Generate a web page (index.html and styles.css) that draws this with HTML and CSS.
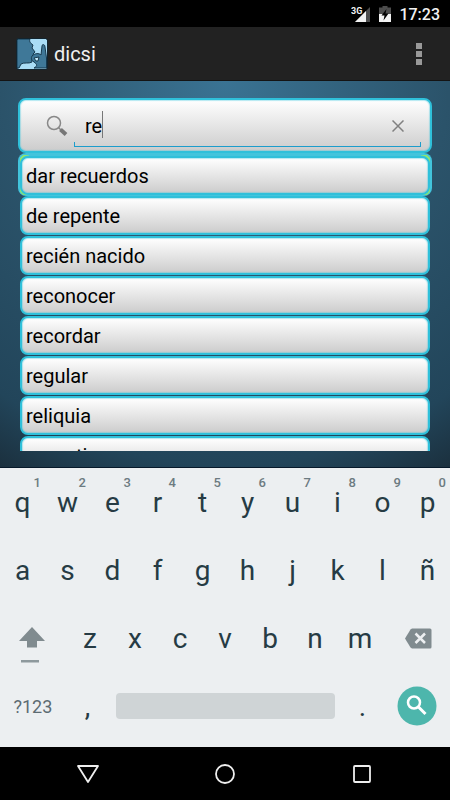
FILE: index.html
```html
<!DOCTYPE html>
<html lang="es">
<head>
<meta charset="utf-8">
<meta name="viewport" content="width=device-width, initial-scale=1">
<title>dicsi</title>
<link rel="stylesheet" href="styles.css">
</head>
<body>
<div class="status">
  <svg class="signal" width="20" height="18" viewBox="0 0 20 18" aria-hidden="true">
    <path d="M19 1V16H4Z" fill="#4d4d4d"/><path d="M15 5V16H4Z" fill="#f2f2f2"/>
    <text class="net" x="0" y="8">3G</text>
  </svg>
  <svg width="12" height="18" viewBox="0 0 12 18" aria-hidden="true">
    <path d="M3.500 0H8.500V1.500H12V8H0V1.500H3.500Z" fill="#4d4d4d"/><path d="M0 8H12V16H0Z" fill="#f2f2f2"/>
    <path d="M7.500 3L2.500 9.500H5.500L4.500 14.500L9.500 7.500H6.500Z" fill="#000"/>
  </svg>
  <span class="clock">17:23</span>
</div>
<header class="bar">
  <svg class="logo" width="32" height="32" viewBox="0 0 32 32" aria-hidden="true">
    <rect x="1" y="1" width="30" height="30" rx="1" fill="#a9dcf5"/>
    <path d="M1 1H14C13 3 14 5 17 7L16 10L19 14L17 16L18 18L16 20V24C13 26 8 24 5 26L3 30H1Z" fill="#3f7898" stroke="#17394e"/>
    <path d="M16 18C19 15 23 15 25 17L26 8C26 6 29 6 29 9L30.500 20V30H18C22 28 21 26 18 24C15 22 15 20 16 18Z" fill="#3f7898" stroke="#17394e"/>
    <path d="M18 20L23 19L22 23L20 23Z" fill="#c4ebfb" stroke="#17394e"/>
    <rect x="0.500" y="0.500" width="31" height="31" rx="2" fill="none" stroke="#12242e"/>
  </svg>
  <h1>dicsi</h1>
  <button class="more" aria-label="Más opciones"><i></i><i></i><i></i></button>
</header>
<main>
  <form class="search" role="search">
    <svg class="lens" width="22" height="22" viewBox="0 0 22 22" aria-hidden="true">
      <circle cx="8" cy="8" r="6.500" fill="none" stroke="#888" stroke-width="1.500"/>
      <path d="M12.500 12.500L15 15" stroke="#888" stroke-width="1.500"/><path d="M14.500 14.500L20 19.500" stroke="#777" stroke-width="4"/>
    </svg>
    <div class="field">
      <input type="text" value="re" aria-label="Buscar"><span class="caret"></span>
      <button type="button" class="clear" aria-label="Borrar búsqueda"><svg width="12" height="12" viewBox="0 0 12 12"><path d="M0.500 0.500L11.500 11.500M11.500 0.500L0.500 11.500" stroke="#808080" stroke-width="1.500"/></svg></button>
    </div>
  </form>
  <ul class="results">
    <li class="selected"><button>dar recuerdos</button></li>
    <li><button>de repente</button></li>
    <li><button>recién nacido</button></li>
    <li><button>reconocer</button></li>
    <li><button>recordar</button></li>
    <li><button>regular</button></li>
    <li><button>reliquia</button></li>
    <li><button>repentino</button></li>
  </ul>
</main>
<section class="keyboard" aria-label="Teclado">
  <div class="keys">
    <button>q<sup>1</sup></button><button>w<sup>2</sup></button><button>e<sup>3</sup></button><button>r<sup>4</sup></button><button>t<sup>5</sup></button><button>y<sup>6</sup></button><button>u<sup>7</sup></button><button>i<sup>8</sup></button><button>o<sup>9</sup></button><button>p<sup>0</sup></button>
  </div>
  <div class="keys">
    <button>a</button><button>s</button><button>d</button><button>f</button><button>g</button><button>h</button><button>j</button><button>k</button><button>l</button><button>ñ</button>
  </div>
  <div class="keys">
    <button class="wide" aria-label="Mayúsculas"><svg width="30" height="50" viewBox="0 -14 30 50"><path d="M13 0L26 14H18V20.500H8V14H0Z" fill="#808b8f"/><path d="M2 33H20V35.500H2Z" fill="#8e999d"/></svg></button>
    <button>z</button><button>x</button><button>c</button><button>v</button><button>b</button><button>n</button><button>m</button>
    <button class="wide" aria-label="Retroceso"><svg width="31" height="21" viewBox="-4 0 31 21"><path d="M7 0.500H25Q26.500 0.500 26.500 2V19Q26.500 20.500 25 20.500H7L5.500 19.500L0 10.500L5.500 1.500Z" fill="#808b8f"/><path d="M10.500 5.500L20 15M20 5.500L10.500 15" stroke="#eceff1" stroke-width="2.500"/></svg></button>
  </div>
  <div class="keys">
    <button class="wide sym">?123</button><button>,</button>
    <button class="space" aria-label="Espacio"></button>
    <button>.</button>
    <button class="wide" aria-label="Buscar"><svg width="40" height="40" viewBox="0 0 40 40"><circle cx="20" cy="20" r="19.500" fill="#4db6ac"/><circle cx="17" cy="16.500" r="6" fill="none" stroke="#fff" stroke-width="2.500"/><path d="M21 20.500L28.500 28" stroke="#fff" stroke-width="3"/></svg></button>
  </div>
</section>
<nav>
  <button aria-label="Atrás"><svg width="24" height="20" viewBox="0 0 24 20"><path d="M2 2H22L12 18Z" fill="none" stroke="#eee" stroke-width="1.800" stroke-linejoin="round"/></svg></button>
  <button aria-label="Inicio"><svg width="22" height="22" viewBox="0 0 22 22"><circle cx="11" cy="11" r="9" fill="none" stroke="#eee" stroke-width="1.800"/></svg></button>
  <button aria-label="Recientes"><svg width="20" height="20" viewBox="0 0 20 20"><rect x="2" y="2" width="16" height="16" rx="1" fill="none" stroke="#eee" stroke-width="1.800"/></svg></button>
</nav>
</body>
</html>
```

FILE: styles.css
```css
* { box-sizing: border-box; }
body {
  margin: 0;
  height: 100vh;
  display: flex;
  flex-direction: column;
  background: #000;
  font-family: Roboto, "Liberation Sans", sans-serif;
}
button, input {
  margin: 0;
  padding: 0;
  border: 0;
  background: none;
  color: inherit;
  font: inherit;
  outline: 0;
}
svg { display: block; }

.status {
  height: 27px;
  padding: 2px 10px 0;
  display: flex;
  align-items: center;
  justify-content: flex-end;
  gap: 8px;
  color: #f2f2f2;
}
.net { font-size: 9px; font-weight: 700; fill: #f2f2f2; }
.clock { font-size: 16px; font-weight: 500; line-height: 24px; }

.bar {
  height: 54px;
  padding: 0 16px;
  display: flex;
  align-items: center;
  gap: 6px;
  background: #222;
  border-bottom: 1px solid #141414;
  color: #f0f0f0;
}
h1 { margin: 0; flex: 1; font-size: 20px; font-weight: 400; }
.more { width: 30px; height: 40px; display: grid; align-content: center; justify-content: center; gap: 2px; }
.more i { width: 6px; height: 6px; background: #999; }

main {
  flex: 1;
  min-height: 0;
  padding: 17px 18px 16px;
  display: flex;
  flex-direction: column;
  border-bottom: 1px solid #06192a;
  background: radial-gradient(circle at 50% 0, #3a7393 0, #2b536a 50%, #22455a 86%, #1b303e 100%);
}
.search, .results button {
  border: 2px solid #2fc0da;
  border-radius: 8px;
  background: linear-gradient(#fff, #ccc);
  box-shadow: inset 0 0 1px 1px rgba(70, 200, 222, 0.4);
}
.search {
  height: 55px;
  flex: none;
  padding: 0 9px 0 26px;
  display: flex;
  align-items: center;
  gap: 6px;
}
.lens { flex: none; }
.field {
  position: relative;
  flex: 1;
  height: 42px;
  align-self: flex-end;
  margin-bottom: 4px;
  padding-right: 17px;
  display: flex;
  align-items: center;
}
.field::after {
  content: "";
  position: absolute;
  left: 0;
  right: 0;
  bottom: 0;
  height: 4px;
  border: 1px solid #1c9dcc;
  border-top: 0;
}
.field input { flex: 1; min-width: 0; padding-left: 11px; font-size: 20px; color: #000; }
.caret { position: absolute; left: 28px; top: 6px; width: 1px; height: 27px; background: #777; }

.results {
  flex: 1;
  min-height: 0;
  overflow: hidden;
  margin: 0;
  padding: 0;
  list-style: none;
}
.results li { padding: 0 2px 1px; }
.results .selected {
  padding: 3px 2px 1px;
  border-radius: 8px;
  background:
    radial-gradient(circle at 100% 100%, transparent 8px, #8fe86a 9px, #8fe86a 10px, transparent 11px) 2px 2px / 9px 9px no-repeat,
    radial-gradient(circle at 0 100%, transparent 8px, #8fe86a 9px, #8fe86a 10px, transparent 11px) right 2px top 2px / 9px 9px no-repeat,
    radial-gradient(circle at 100% 0, transparent 8px, #8fe86a 9px, #8fe86a 10px, transparent 11px) left 2px bottom 1px / 9px 9px no-repeat,
    radial-gradient(circle at 0 0, transparent 8px, #8fe86a 9px, #8fe86a 10px, transparent 11px) right 2px bottom 1px / 9px 9px no-repeat,
    #42c4dc;
}
.results button {
  display: block;
  width: 100%;
  height: 39px;
  padding: 0 4px;
  color: #000;
  font-size: 20px;
  text-align: left;
}

.keyboard { padding-bottom: 7px; background: #eceff1; color: #263b44; }
.keys { display: flex; height: 68px; }
.keys button {
  position: relative;
  flex: 2;
  display: flex;
  align-items: center;
  justify-content: center;
  font-size: 28px;
}
.keys sup { position: absolute; top: 7px; right: 4px; font-size: 13px; font-weight: 500; line-height: 15px; color: #6c7b81; }
.keys .wide { flex: 3; }
.keys .sym { font-size: 18px; color: #5c6b72; }
.keys .space { flex: 10; height: 26px; margin: 0 6px; align-self: center; border-radius: 4px; background: #cfd4d6; }

nav { height: 53px; padding: 0 20px; display: flex; }
nav button { flex: 1; display: grid; place-items: center; }
```
